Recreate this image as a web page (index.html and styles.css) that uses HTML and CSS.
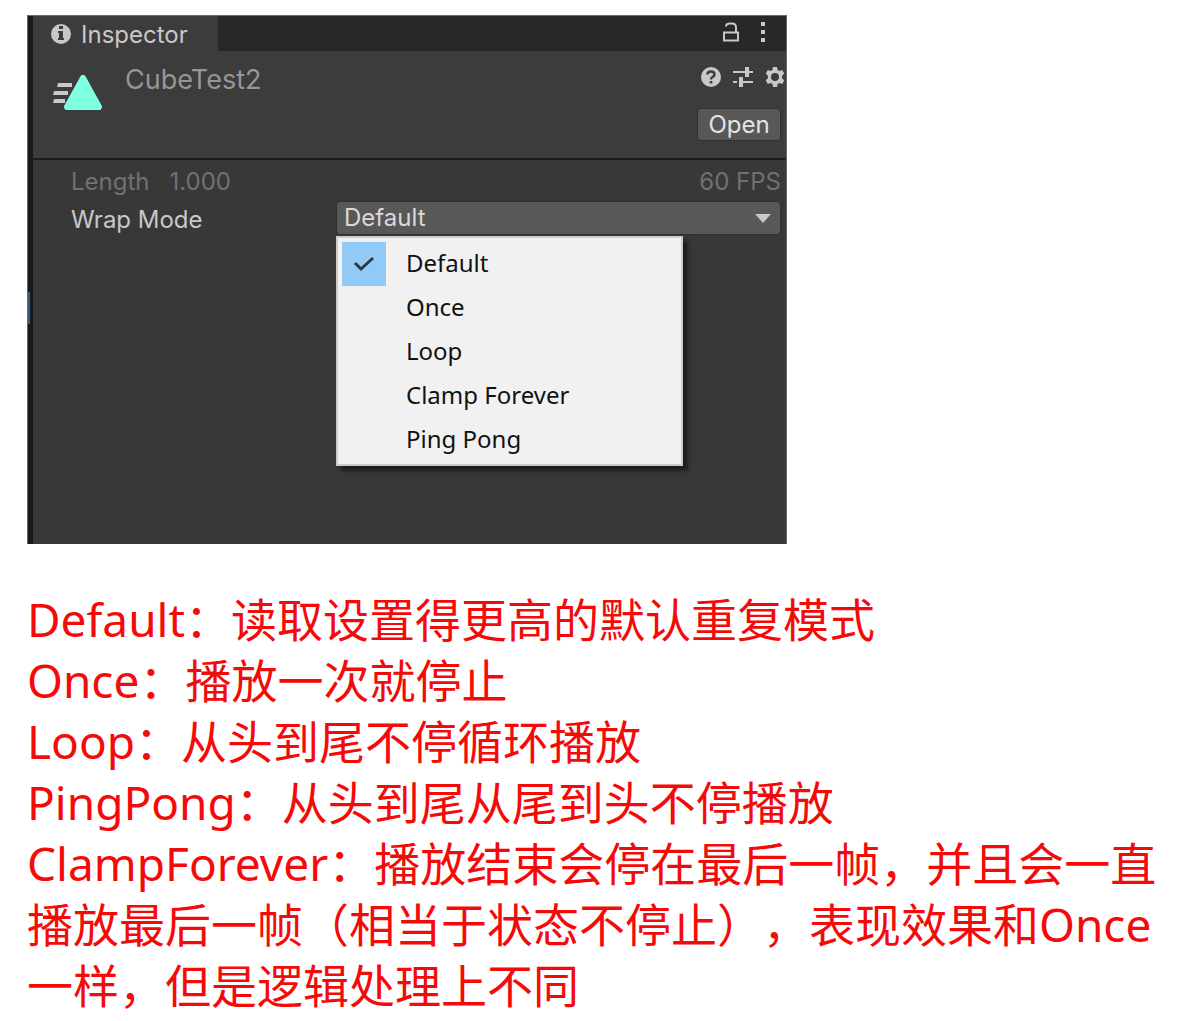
FILE: index.html
```html
<!DOCTYPE html>
<html lang="zh-CN">
<head>
<meta charset="utf-8">
<meta name="viewport" content="width=device-width, initial-scale=1">
<title>Wrap Mode</title>
<link rel="stylesheet" href="styles.css">
</head>
<body>
<main class="page">
  <section class="inspector" aria-label="Inspector">
    <div class="edge"><span class="edge-mark"></span></div>
    <div class="panel">
      <div class="tabbar">
        <div class="tab">
          <svg class="icon" viewBox="0 0 20 20" aria-hidden="true"><circle cx="10" cy="10" r="10" fill="#c8c8c8"/><path d="M8 2h4v3H8zM7 7h5v7h1v2H7v-2h1V9H7z" fill="#3c3c3c"/></svg>
          <span>Inspector</span>
        </div>
        <div class="tab-tools">
          <button class="tool" aria-label="Lock"><svg class="icon" viewBox="0 0 20 20"><path d="M3 10.500h14v8H3zM5 4.500q0-3 4-3h2q4 0 4 4v5" fill="none" stroke="#c8c8c8" stroke-width="2"/></svg></button>
          <button class="tool" aria-label="More"><svg class="icon" viewBox="0 0 20 20"><path d="M8 0h4v4H8zM8 8h4v4H8zM8 16h4v4H8z" fill="#c8c8c8"/></svg></button>
        </div>
      </div>
      <header class="asset">
        <svg class="asset-icon" viewBox="0 0 50 38" aria-hidden="true"><path d="M6 9h14v4H5zM2 17h14v4H1zM2 25h11v4H1z" fill="#c8c8c8"/><path d="M31 4 47 33H15z" fill="#7fffe0" stroke="#7fffe0" stroke-width="6" stroke-linejoin="round"/></svg>
        <h1 class="asset-name">CubeTest2</h1>
        <div class="asset-actions">
          <div class="asset-tools">
            <button class="tool" aria-label="Help"><svg class="icon" viewBox="0 0 20 20"><circle cx="10" cy="10" r="10" fill="#c8c8c8"/><path d="M6.500 7.500Q6.500 4.500 10 4.500T13.500 7.500Q13.500 9 11.500 10 10 10.800 10 12.500" fill="none" stroke="#3c3c3c" stroke-width="2.400"/><path d="M8.700 14h2.600v2.500H8.700z" fill="#3c3c3c"/></svg></button>
            <button class="tool" aria-label="Presets"><svg class="icon" viewBox="0 0 20 20"><path d="M0 5h12M14 5h6M0 15h4M8 15h12" fill="none" stroke="#c8c8c8" stroke-width="2"/><path d="M12 0h4v10h-4zM6 10h4v10H6z" fill="#c8c8c8"/></svg></button>
            <button class="tool" aria-label="Settings"><svg class="icon" viewBox="0 0 20 20"><path fill="#c8c8c8" fill-rule="evenodd" d="M8 0h4l.6 3 1.800 1 2.800-1 2 3.500L17 8.900v2.200l2.200 2.400-2 3.500-2.800-1-1.800 1-.6 3H8l-.6-3-1.800-1-2.800 1-2-3.500L3 11.100V8.900L.8 6.500l2-3.500 2.800 1 1.800-1zM10 6a4 4 0 1 0 0 8 4 4 0 0 0 0-8z"/></svg></button>
          </div>
          <button class="open">Open</button>
        </div>
      </header>
      <div class="fields">
        <div class="row muted">
          <span class="length">Length</span><span>1.000</span><span class="fps">60 FPS</span>
        </div>
        <div class="row">
          <label class="label" for="wrap-mode">Wrap Mode</label>
          <div class="dropdown">
            <select id="wrap-mode" class="select">
              <option selected>Default</option>
              <option>Once</option>
              <option>Loop</option>
              <option>Clamp Forever</option>
              <option>Ping Pong</option>
            </select>
            <svg class="arrow" viewBox="0 0 16 9" aria-hidden="true"><path d="M0 0h16L8 9z" fill="#c8c8c8"/></svg>
            <ul class="menu">
              <li class="item"><span class="check"><svg viewBox="0 0 20 16" width="20" height="16" aria-hidden="true"><path d="M1 7l6 6L19 2" fill="none" stroke="#303840" stroke-width="3"/></svg></span>Default</li>
              <li class="item"><span class="slot"></span>Once</li>
              <li class="item"><span class="slot"></span>Loop</li>
              <li class="item"><span class="slot"></span>Clamp Forever</li>
              <li class="item"><span class="slot"></span>Ping Pong</li>
            </ul>
          </div>
        </div>
      </div>
    </div>
  </section>
  <section class="notes">
    <p>Default：读取设置得更高的默认重复模式</p>
    <p>Once：播放一次就停止</p>
    <p>Loop：从头到尾不停循环播放</p>
    <p>PingPong：从头到尾从尾到头不停播放</p>
    <p>ClampForever：播放结束会停在最后一帧，并且会一直播放最后一帧（相当于状态不停止），表现效果和Once一样，但是逻辑处理上不同</p>
  </section>
</main>
</body>
</html>
```
FILE: styles.css
```css
* { box-sizing: border-box; }
body { margin: 0; background: #fff; }
p, h1, ul { margin: 0; padding: 0; }
button { border: 0; padding: 0; background: none; font: inherit; color: inherit; }

.page { padding: 15px 27px 0; }

.inspector {
  display: flex;
  max-width: 760px;
  min-height: 529px;
  border: 1px solid #6a6a6a;
  border-bottom: 0;
  background: #383838;
  color: #c8c8c8;
  font: 24px/32px Inter, "Liberation Sans", sans-serif;
}
.edge { flex: none; width: 5px; padding-top: 276px; background: #191919; }
.edge-mark { display: block; width: 2px; height: 32px; background: #2c5d87; }
.panel { flex: 1; min-width: 0; }

.tabbar { display: flex; justify-content: space-between; height: 35px; background: #282828; }
.tab {
  display: flex;
  align-items: center;
  gap: 10px;
  width: 185px;
  padding: 2px 0 0 18px;
  background: #3c3c3c;
}
.tab .icon { margin-bottom: 2px; }
.tab-tools { display: flex; align-items: center; gap: 12px; padding: 0 13px 4px 0; }
.icon { display: block; flex: none; width: 20px; height: 20px; }
.tool { display: block; }

.asset {
  display: flex;
  align-items: flex-start;
  height: 109px;
  padding-left: 19px;
  background: #3c3c3c;
  border-bottom: 2px solid #1c1c1c;
}
.asset-icon { flex: none; width: 50px; height: 38px; margin-top: 23px; }
.asset-name { margin: 13px 0 0 23px; color: #969696; font-size: 27px; font-weight: 400; line-height: 32px; }
.asset-actions { display: flex; flex-direction: column; align-items: flex-end; gap: 21px; margin-left: auto; padding-top: 16px; }
.asset-tools { display: flex; gap: 12px; padding-right: 1px; }
.open {
  width: 84px;
  height: 33px;
  margin-right: 5px;
  border: 1px solid #303030;
  border-radius: 4px;
  background: #585858;
  color: #e4e4e4;
}

.fields { padding: 6px 5px 0 38px; }
.row { display: flex; align-items: center; height: 32px; margin-bottom: 4px; }
.muted { color: #717171; }
.length { margin-right: 20px; }
.fps { margin-left: auto; }
.label { width: 265px; flex: none; padding-top: 4px; }
.dropdown { position: relative; flex: 1; min-width: 0; }
.select {
  display: block;
  width: 100%;
  height: 34px;
  padding: 0 7px;
  border: 1px solid #303030;
  border-radius: 4px;
  appearance: none;
  background: #585858;
  color: #d8d8d8;
  font: inherit;
}
.arrow { position: absolute; right: 10px; top: 13px; width: 16px; height: 9px; }

.menu {
  position: absolute;
  top: 35px;
  left: 0;
  width: 347px;
  padding: 4px 4px 2px;
  border: 2px solid #ccc;
  background: #f1f1f1;
  box-shadow: 5px 5px 4px rgba(0, 0, 0, 0.5);
  color: #111;
  font: 24px/41px "Noto Sans", sans-serif;
  list-style: none;
}
.item { display: flex; height: 44px; }
.check, .slot { flex: none; width: 44px; height: 44px; margin-right: 20px; }
.check { display: flex; align-items: center; justify-content: center; background: #91c9f7; }

.notes {
  padding-top: 45px;
  color: #f50a0a;
  font: 46px/61px "Noto Sans", "Noto Sans CJK SC", sans-serif;
  text-spacing-trim: space-all;
}
```
